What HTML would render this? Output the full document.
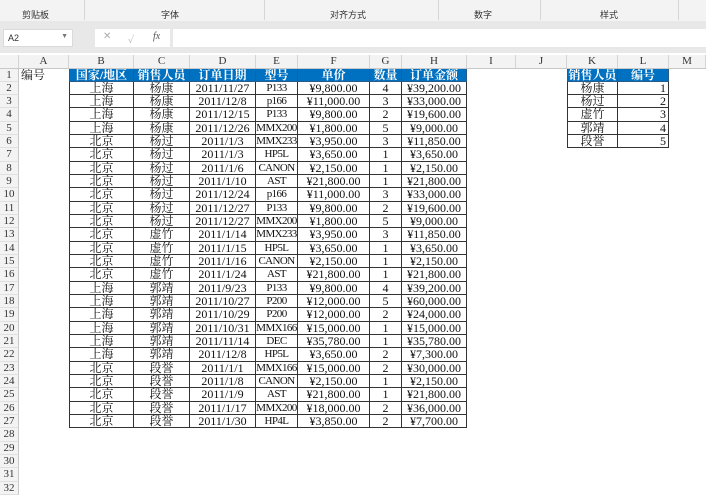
<!DOCTYPE html>
<html><head><meta charset="utf-8"><style>
*{margin:0;padding:0;box-sizing:border-box}
body{width:706px;height:496px;overflow:hidden;background:#fff;position:relative;font-family:"Liberation Serif","Noto Serif CJK SC",serif;font-size:12px;color:#111}
.rib{position:absolute;left:0;top:0;width:706px;height:21px;background:#f3f3f3;font-family:"Liberation Sans","Noto Sans CJK SC",sans-serif;font-size:9px;color:#333}
.rib span{position:absolute;top:8px}
.rib i{position:absolute;top:0;width:1px;height:20px;background:#d6d6d6}
.band{position:absolute;left:0;top:21px;width:706px;height:32px;background:#e8e8e8}
.nb{position:absolute;left:3px;top:29px;width:70px;height:18px;background:#fff;border:1px solid #dadada;font-family:"Liberation Sans",sans-serif;font-size:9px;padding:3px 4px;color:#333}
.fx{position:absolute;left:95px;top:29px;width:75px;height:18px;background:#fff;color:#aaa;font-size:10px}
.fi{position:absolute;left:173px;top:29px;width:533px;height:18px;background:#fff}
.grid{position:absolute;left:0;top:55px}
.h{display:flex;height:13.5px;background:#f3f3f3;border-bottom:1px solid #c8c8c8;font-size:11px}
.r{display:flex;height:13.34px}
.h>span,.r>span{flex:none;height:100%;text-align:center;line-height:13px;white-space:nowrap;overflow:hidden}
.h>span{border-right:1px solid #d4d4d4;color:#333}
.r>span:first-child{background:#f3f3f3;border-right:1px solid #c8c8c8;border-bottom:1px solid #e0e0e0;color:#333;text-align:center;font-size:11px}
.h>:nth-child(1),.r>:nth-child(1){width:19px}
.h>:nth-child(2),.r>:nth-child(2){width:50px}
.h>:nth-child(3),.r>:nth-child(3){width:65px}
.h>:nth-child(4),.r>:nth-child(4){width:56px}
.h>:nth-child(5),.r>:nth-child(5){width:66px}
.h>:nth-child(6),.r>:nth-child(6){width:42px}
.h>:nth-child(7),.r>:nth-child(7){width:72px}
.h>:nth-child(8),.r>:nth-child(8){width:32px}
.h>:nth-child(9),.r>:nth-child(9){width:65px}
.h>:nth-child(10),.r>:nth-child(10){width:49px}
.h>:nth-child(11),.r>:nth-child(11){width:51px}
.h>:nth-child(12),.r>:nth-child(12){width:51px}
.h>:nth-child(13),.r>:nth-child(13){width:51px}
.h>:nth-child(14),.r>:nth-child(14){width:37px}
.r>:nth-child(6){font-size:11px;letter-spacing:-0.6px}
.r>.t{border-right:1px solid #333;border-bottom:1px solid #333}
.r>.t.l{border-left:1px solid #333}
.r.hd>.t{background:#0070c0;color:#fff;font-weight:bold;border-color:#2a5a8a;font-size:12px;letter-spacing:0}
.r>.a{text-align:left;padding-left:2px}
.r>.rt{text-align:right;padding-right:2px}
</style></head><body>
<div class="rib"><span style="left:22px">剪贴板</span><i style="left:84px"></i><span style="left:161px">字体</span><i style="left:264px"></i><span style="left:330px">对齐方式</span><i style="left:438px"></i><span style="left:474px">数字</span><i style="left:540px"></i><span style="left:600px">样式</span><i style="left:678px"></i></div>
<div class="band"></div>
<div class="nb">A2<span style="float:right;font-size:7px;color:#777">▼</span></div>
<div class="fx"><span style="position:absolute;left:8px;top:2px">✕</span><span style="position:absolute;left:33px;top:2px">✓</span><span style="position:absolute;left:58px;top:2px;color:#555;font-style:italic">fx</span></div>
<div class="fi"></div>
<div class="grid">
<div class="h"><span></span><span>A</span><span>B</span><span>C</span><span>D</span><span>E</span><span>F</span><span>G</span><span>H</span><span>I</span><span>J</span><span>K</span><span>L</span><span>M</span></div>
<div class="r hd"><span>1</span><span class="a">编号</span><span class="t l">国家/地区</span><span class="t">销售人员</span><span class="t">订单日期</span><span class="t">型号</span><span class="t">单价</span><span class="t">数量</span><span class="t">订单金额</span><span></span><span></span><span class="t l">销售人员</span><span class="t">编号</span><span></span></div>
<div class="r"><span>2</span><span></span><span class="t l">上海</span><span class="t">杨康</span><span class="t">2011/11/27</span><span class="t">P133</span><span class="t">¥9,800.00</span><span class="t">4</span><span class="t">¥39,200.00</span><span></span><span></span><span class="t l">杨康</span><span class="t rt">1</span><span></span></div>
<div class="r"><span>3</span><span></span><span class="t l">上海</span><span class="t">杨康</span><span class="t">2011/12/8</span><span class="t">p166</span><span class="t">¥11,000.00</span><span class="t">3</span><span class="t">¥33,000.00</span><span></span><span></span><span class="t l">杨过</span><span class="t rt">2</span><span></span></div>
<div class="r"><span>4</span><span></span><span class="t l">上海</span><span class="t">杨康</span><span class="t">2011/12/15</span><span class="t">P133</span><span class="t">¥9,800.00</span><span class="t">2</span><span class="t">¥19,600.00</span><span></span><span></span><span class="t l">虚竹</span><span class="t rt">3</span><span></span></div>
<div class="r"><span>5</span><span></span><span class="t l">上海</span><span class="t">杨康</span><span class="t">2011/12/26</span><span class="t">MMX200</span><span class="t">¥1,800.00</span><span class="t">5</span><span class="t">¥9,000.00</span><span></span><span></span><span class="t l">郭靖</span><span class="t rt">4</span><span></span></div>
<div class="r"><span>6</span><span></span><span class="t l">北京</span><span class="t">杨过</span><span class="t">2011/1/3</span><span class="t">MMX233</span><span class="t">¥3,950.00</span><span class="t">3</span><span class="t">¥11,850.00</span><span></span><span></span><span class="t l">段誉</span><span class="t rt">5</span><span></span></div>
<div class="r"><span>7</span><span></span><span class="t l">北京</span><span class="t">杨过</span><span class="t">2011/1/3</span><span class="t">HP5L</span><span class="t">¥3,650.00</span><span class="t">1</span><span class="t">¥3,650.00</span></div>
<div class="r"><span>8</span><span></span><span class="t l">北京</span><span class="t">杨过</span><span class="t">2011/1/6</span><span class="t">CANON</span><span class="t">¥2,150.00</span><span class="t">1</span><span class="t">¥2,150.00</span></div>
<div class="r"><span>9</span><span></span><span class="t l">北京</span><span class="t">杨过</span><span class="t">2011/1/10</span><span class="t">AST</span><span class="t">¥21,800.00</span><span class="t">1</span><span class="t">¥21,800.00</span></div>
<div class="r"><span>10</span><span></span><span class="t l">北京</span><span class="t">杨过</span><span class="t">2011/12/24</span><span class="t">p166</span><span class="t">¥11,000.00</span><span class="t">3</span><span class="t">¥33,000.00</span></div>
<div class="r"><span>11</span><span></span><span class="t l">北京</span><span class="t">杨过</span><span class="t">2011/12/27</span><span class="t">P133</span><span class="t">¥9,800.00</span><span class="t">2</span><span class="t">¥19,600.00</span></div>
<div class="r"><span>12</span><span></span><span class="t l">北京</span><span class="t">杨过</span><span class="t">2011/12/27</span><span class="t">MMX200</span><span class="t">¥1,800.00</span><span class="t">5</span><span class="t">¥9,000.00</span></div>
<div class="r"><span>13</span><span></span><span class="t l">北京</span><span class="t">虚竹</span><span class="t">2011/1/14</span><span class="t">MMX233</span><span class="t">¥3,950.00</span><span class="t">3</span><span class="t">¥11,850.00</span></div>
<div class="r"><span>14</span><span></span><span class="t l">北京</span><span class="t">虚竹</span><span class="t">2011/1/15</span><span class="t">HP5L</span><span class="t">¥3,650.00</span><span class="t">1</span><span class="t">¥3,650.00</span></div>
<div class="r"><span>15</span><span></span><span class="t l">北京</span><span class="t">虚竹</span><span class="t">2011/1/16</span><span class="t">CANON</span><span class="t">¥2,150.00</span><span class="t">1</span><span class="t">¥2,150.00</span></div>
<div class="r"><span>16</span><span></span><span class="t l">北京</span><span class="t">虚竹</span><span class="t">2011/1/24</span><span class="t">AST</span><span class="t">¥21,800.00</span><span class="t">1</span><span class="t">¥21,800.00</span></div>
<div class="r"><span>17</span><span></span><span class="t l">上海</span><span class="t">郭靖</span><span class="t">2011/9/23</span><span class="t">P133</span><span class="t">¥9,800.00</span><span class="t">4</span><span class="t">¥39,200.00</span></div>
<div class="r"><span>18</span><span></span><span class="t l">上海</span><span class="t">郭靖</span><span class="t">2011/10/27</span><span class="t">P200</span><span class="t">¥12,000.00</span><span class="t">5</span><span class="t">¥60,000.00</span></div>
<div class="r"><span>19</span><span></span><span class="t l">上海</span><span class="t">郭靖</span><span class="t">2011/10/29</span><span class="t">P200</span><span class="t">¥12,000.00</span><span class="t">2</span><span class="t">¥24,000.00</span></div>
<div class="r"><span>20</span><span></span><span class="t l">上海</span><span class="t">郭靖</span><span class="t">2011/10/31</span><span class="t">MMX166</span><span class="t">¥15,000.00</span><span class="t">1</span><span class="t">¥15,000.00</span></div>
<div class="r"><span>21</span><span></span><span class="t l">上海</span><span class="t">郭靖</span><span class="t">2011/11/14</span><span class="t">DEC</span><span class="t">¥35,780.00</span><span class="t">1</span><span class="t">¥35,780.00</span></div>
<div class="r"><span>22</span><span></span><span class="t l">上海</span><span class="t">郭靖</span><span class="t">2011/12/8</span><span class="t">HP5L</span><span class="t">¥3,650.00</span><span class="t">2</span><span class="t">¥7,300.00</span></div>
<div class="r"><span>23</span><span></span><span class="t l">北京</span><span class="t">段誉</span><span class="t">2011/1/1</span><span class="t">MMX166</span><span class="t">¥15,000.00</span><span class="t">2</span><span class="t">¥30,000.00</span></div>
<div class="r"><span>24</span><span></span><span class="t l">北京</span><span class="t">段誉</span><span class="t">2011/1/8</span><span class="t">CANON</span><span class="t">¥2,150.00</span><span class="t">1</span><span class="t">¥2,150.00</span></div>
<div class="r"><span>25</span><span></span><span class="t l">北京</span><span class="t">段誉</span><span class="t">2011/1/9</span><span class="t">AST</span><span class="t">¥21,800.00</span><span class="t">1</span><span class="t">¥21,800.00</span></div>
<div class="r"><span>26</span><span></span><span class="t l">北京</span><span class="t">段誉</span><span class="t">2011/1/17</span><span class="t">MMX200</span><span class="t">¥18,000.00</span><span class="t">2</span><span class="t">¥36,000.00</span></div>
<div class="r"><span>27</span><span></span><span class="t l">北京</span><span class="t">段誉</span><span class="t">2011/1/30</span><span class="t">HP4L</span><span class="t">¥3,850.00</span><span class="t">2</span><span class="t">¥7,700.00</span></div>
<div class="r"><span>28</span></div>
<div class="r"><span>29</span></div>
<div class="r"><span>30</span></div>
<div class="r"><span>31</span></div>
<div class="r"><span>32</span></div>
</div>
</body></html>
